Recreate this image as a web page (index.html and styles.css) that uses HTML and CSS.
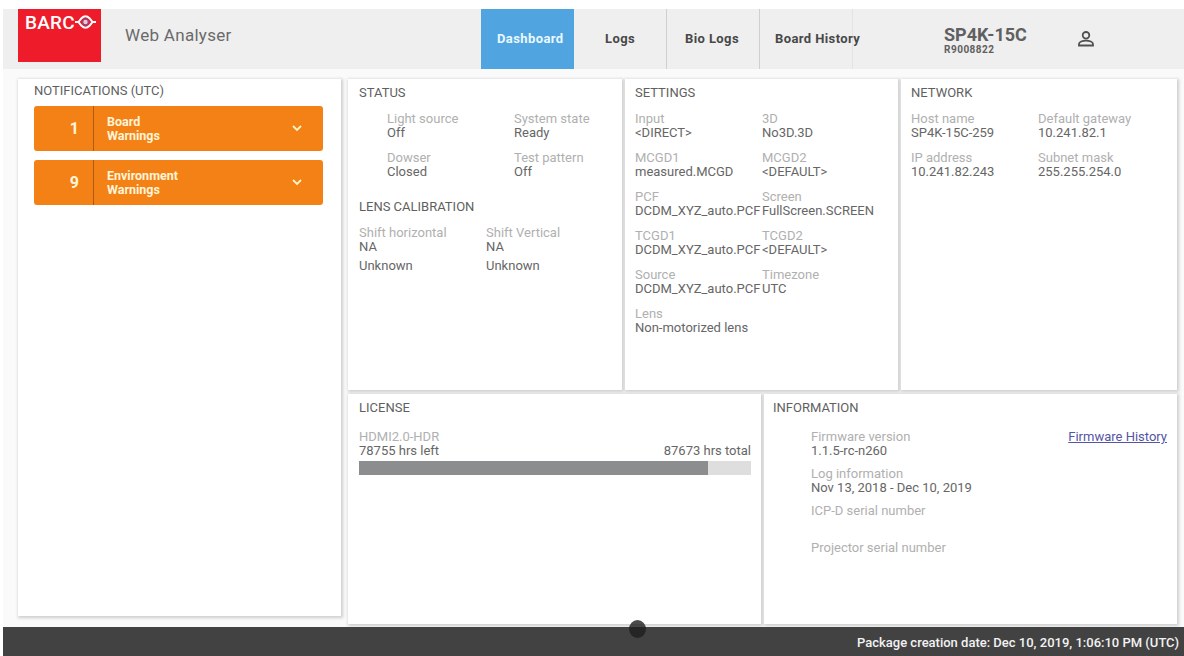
FILE: index.html
```
<!DOCTYPE html>
<html lang="en">

<head>
  <meta charset="UTF-8" />
  <meta name="viewport" content="width=device-width, initial-scale=1.0" />
  <title>Web Analyser</title>
  <link rel="stylesheet" href="styles.css">
</head>

<body>
  <div class="app">
    <header class="header">
      <div class="logo">
        <span>BARC</span>
        <svg width="21" height="14" viewBox="0 0 21 14" fill="none" stroke="#fff">
          <path d="M0 7h4M17 7h4" stroke-width="2" />
          <path d="M3.500 7l3-3.800q4-4 8 0L17.500 7l-3 3.800q-4 4-8 0z" stroke-width="2" />
          <circle cx="10.500" cy="7" r="2.800" fill="#f5c3cf" stroke="#804c8e" stroke-width="1.200" />
        </svg>
      </div>
      <div class="title">Web Analyser</div>
      <nav class="nav">
        <a class="tab active">Dashboard</a>
        <a class="tab logs">Logs</a>
        <a class="tab bio">Bio Logs</a>
        <a class="tab history">Board History</a>
      </nav>
      <div class="device">
        <div class="model">SP4K-15C</div>
        <div class="serial">R9008822</div>
      </div>
      <svg class="user" width="18" height="18" viewBox="0 0 18 18" fill="none" stroke="#505050" stroke-width="1.800">
        <circle cx="9" cy="5.300" r="3.300" />
        <path d="M2 15.500v-1.500c0-2 3.500-3.400 7-3.400s7 1.400 7 3.400v1.500z" />
      </svg>
    </header>

    <main class="main">
      <section class="panel notifications">
        <h2>NOTIFICATIONS (UTC)</h2>
        <div class="notice">
          <div class="count">1</div>
          <div class="notice-text">Board<br>Warnings</div>
          <svg width="10" height="7" viewBox="0 0 10 7" fill="none" stroke="#fff3c8" stroke-width="1.800">
            <path d="M1 1l4 4 4-4" />
          </svg>
        </div>
        <div class="notice">
          <div class="count">9</div>
          <div class="notice-text">Environment<br>Warnings</div>
          <svg width="10" height="7" viewBox="0 0 10 7" fill="none" stroke="#fff3c8" stroke-width="1.800">
            <path d="M1 1l4 4 4-4" />
          </svg>
        </div>
      </section>

      <div class="content">
        <div class="row top">
          <section class="panel">
            <h2>STATUS</h2>
            <div class="fields status">
              <div class="field"><label>Light source</label><span>Off</span></div>
              <div class="field"><label>System state</label><span>Ready</span></div>
              <div class="field"><label>Dowser</label><span>Closed</span></div>
              <div class="field"><label>Test pattern</label><span>Off</span></div>
            </div>
            <h2 class="lens-title">LENS CALIBRATION</h2>
            <div class="fields">
              <div class="field"><label>Shift horizontal</label><span>NA</span><span class="unknown">Unknown</span></div>
              <div class="field"><label>Shift Vertical</label><span>NA</span><span class="unknown">Unknown</span></div>
            </div>
          </section>

          <section class="panel">
            <h2>SETTINGS</h2>
            <div class="fields">
              <div class="field"><label>Input</label><span>&lt;DIRECT&gt;</span></div>
              <div class="field"><label>3D</label><span>No3D.3D</span></div>
              <div class="field"><label>MCGD1</label><span>measured.MCGD</span></div>
              <div class="field"><label>MCGD2</label><span>&lt;DEFAULT&gt;</span></div>
              <div class="field"><label>PCF</label><span>DCDM_XYZ_auto.PCF</span></div>
              <div class="field"><label>Screen</label><span>FullScreen.SCREEN</span></div>
              <div class="field"><label>TCGD1</label><span>DCDM_XYZ_auto.PCF</span></div>
              <div class="field"><label>TCGD2</label><span>&lt;DEFAULT&gt;</span></div>
              <div class="field"><label>Source</label><span>DCDM_XYZ_auto.PCF</span></div>
              <div class="field"><label>Timezone</label><span>UTC</span></div>
              <div class="field"><label>Lens</label><span>Non-motorized lens</span></div>
            </div>
          </section>

          <section class="panel">
            <h2>NETWORK</h2>
            <div class="fields">
              <div class="field"><label>Host name</label><span>SP4K-15C-259</span></div>
              <div class="field"><label>Default gateway</label><span>10.241.82.1</span></div>
              <div class="field"><label>IP address</label><span>10.241.82.243</span></div>
              <div class="field"><label>Subnet mask</label><span>255.255.254.0</span></div>
            </div>
          </section>
        </div>

        <div class="row bottom">
          <section class="panel">
            <h2>LICENSE</h2>
            <div class="field"><label>HDMI2.0-HDR</label></div>
            <div class="hours">
              <span>78755 hrs left</span>
              <span>87673 hrs total</span>
            </div>
            <div class="bar">
              <div class="bar-fill" style="width: 89%"></div>
            </div>
          </section>

          <section class="panel">
            <h2>INFORMATION</h2>
            <div class="info">
              <div class="info-list">
                <div class="field"><label>Firmware version</label><span>1.1.5-rc-n260</span></div>
                <div class="field"><label>Log information</label><span>Nov 13, 2018 - Dec 10, 2019</span></div>
                <div class="field"><label>ICP-D serial number</label></div>
                <div class="field"><label>Projector serial number</label></div>
              </div>
              <a class="link" href="#">Firmware History</a>
            </div>
          </section>
        </div>
      </div>
    </main>

    <footer class="footer">
      <div class="dot"></div>
      Package creation date: Dec 10, 2019, 1:06:10 PM (UTC)
    </footer>
  </div>
</body>

</html>
```

FILE: styles.css
```
* {
  margin: 0;
  padding: 0;
  box-sizing: border-box;
  font-family: Roboto, sans-serif;
}

body {
  height: 656px;
  padding: 9px 0 0 3px;
  background: #fff;
  overflow: hidden;
}

.app {
  display: flex;
  flex-direction: column;
  height: 647px;
  background: #fafafa;
}

.header {
  display: flex;
  height: 60px;
  flex-shrink: 0;
  padding-left: 15px;
  background: #efefef;
}

.logo {
  display: flex;
  width: 83px;
  height: 53px;
  padding: 6px 0 0 7px;
  background: #ee1b2a;
  color: #fff;
}

.logo span {
  width: 50px;
  font-size: 19px;
  line-height: 15px;
  font-weight: 500;
  letter-spacing: 0.2px;
}

.title {
  width: 380px;
  padding-left: 24px;
  font-size: 17px;
  line-height: 52px;
  letter-spacing: 0.3px;
  color: #6a6a6a;
}

.nav {
  display: flex;
  width: 463px;
}

.tab {
  height: 60px;
  font-size: 13px;
  line-height: 59px;
  font-weight: 700;
  letter-spacing: 0.4px;
  color: #484848;
  white-space: nowrap;
}

.active {
  width: 93px;
  padding-left: 16px;
  background: #50a5e0;
  color: #eaf8ff;
}

.logs {
  width: 93px;
  padding-left: 31px;
  border-right: 1px solid #cfcfcf;
}

.bio {
  width: 93px;
  padding-left: 18px;
  border-right: 1px solid #cfcfcf;
}

.history {
  width: 93px;
  padding-left: 15px;
  border-right: 1px solid #e3e3e3;
}

.device {
  width: 133px;
  padding-top: 16px;
  color: #606060;
}

.model {
  font-size: 18px;
  line-height: 19px;
  font-weight: 700;
}

.serial {
  font-size: 10px;
  line-height: 12px;
  font-weight: 700;
  letter-spacing: 0.5px;
}

.user {
  margin-top: 21px;
}

.main {
  display: flex;
  height: 558px;
  padding: 10px 7px 0 15px;
}

.panel {
  background: #fff;
  box-shadow: 1px 1px 3px 1px #cecece;
}

h2 {
  margin-bottom: 12px;
  font-size: 13px;
  line-height: 14px;
  font-weight: 400;
  color: #5f5f5f;
}

.notifications {
  width: 323px;
  height: 537px;
  margin-right: 7px;
  padding: 5px 18px 0 16px;
}

.notifications h2 {
  margin-bottom: 8px;
}

.notice {
  display: flex;
  align-items: center;
  height: 45px;
  margin-bottom: 9px;
  padding-right: 21px;
  border-radius: 3px;
  background: #f48115;
  color: #fff5d8;
}

.count {
  width: 60px;
  height: 45px;
  padding-right: 14px;
  border-right: 1px solid #ad5b10;
  font-size: 16px;
  line-height: 45px;
  font-weight: 700;
  text-align: right;
}

.notice-text {
  flex: 1;
  padding-left: 13px;
  font-size: 12.500px;
  line-height: 14px;
  font-weight: 700;
}

.content {
  display: flex;
  flex-direction: column;
  flex: 1;
  gap: 4px;
}

.row {
  display: grid;
  gap: 3px;
}

.row .panel {
  padding: 7px 10px 0 10px;
}

.top {
  grid-template-columns: 274px 273px 276px;
  height: 311px;
}

.bottom {
  grid-template-columns: 413px 413px;
  height: 230px;
}

.top .panel:first-child,
.bottom .panel:first-child {
  padding-left: 11px;
}

.bottom .panel:last-child {
  padding-left: 9px;
}

.fields {
  display: grid;
  grid-template-columns: 127px 127px;
  row-gap: 11px;
}

.status {
  padding-left: 28px;
}

.field label,
.field span {
  display: block;
  font-size: 13px;
  line-height: 14px;
  white-space: nowrap;
  color: #666;
}

.field label {
  color: #b0b0b0;
}

.field .unknown {
  margin-top: 5px;
}

.lens-title {
  margin-top: 21px;
}

.row.bottom h2 {
  margin-bottom: 15px;
}

.hours {
  display: flex;
  justify-content: space-between;
  font-size: 13px;
  line-height: 14px;
  color: #666;
}

.bar {
  height: 14px;
  margin-top: 3px;
  background: #dedede;
}

.bar-fill {
  height: 14px;
  background: #8b8d8e;
}

.info {
  display: flex;
  justify-content: space-between;
  padding-left: 38px;
}

.info-list .field {
  height: 37px;
}

.link {
  font-size: 13px;
  line-height: 14px;
  color: #5555a5;
}

.footer {
  position: relative;
  flex-shrink: 0;
  height: 29px;
  padding-right: 5px;
  background: #424243;
  color: #f2f2f2;
  font-size: 13px;
  line-height: 31px;
  font-weight: 500;
  text-align: right;
}

.dot {
  position: absolute;
  left: 626px;
  top: -7px;
  width: 17px;
  height: 18px;
  border-radius: 50%;
  background: rgba(30, 30, 30, 0.8);
}
```
